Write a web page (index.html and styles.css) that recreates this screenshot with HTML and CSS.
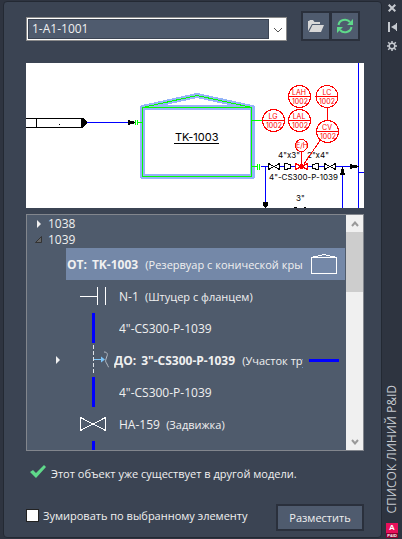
FILE: index.html
```html
<!DOCTYPE html>
<html lang="ru">
<head>
    <meta charset="UTF-8">
    <meta name="viewport" content="width=device-width, initial-scale=1.0">
    <title>Список линий P&amp;ID</title>
    <link rel="stylesheet" href="styles.css">
</head>
<body>
  <main class="panel">
    <div class="toolbar">
      <div class="line-select">
        <select aria-label="Линия">
          <option>1-A1-1001</option>
        </select>
        <svg class="chevron" width="10" height="6" viewBox="0 0 10 6"><path d="M1 1l4 4 4-4"/></svg>
      </div>
      <div class="tools">
        <button type="button" aria-label="Открыть">
          <svg width="16" height="12" viewBox="0 0 16 12"><path fill="#d8d8d8" d="M0 11V1h1l1-1h3l1.500 2H12v2H4zM4.500 5H16l-3 7H1z"/></svg>
        </button>
        <button type="button" aria-label="Обновить">
          <svg width="16" height="16" viewBox="0 0 16 16"><g fill="none" stroke="#5fd98a" stroke-width="2"><path d="M1.500 7A6.500 6 0 0 1 13 4"/><path d="M14.500 9A6.500 6 0 0 1 3 12"/></g><path fill="#5fd98a" d="M16 1v6h-6zM0 15V9h6z"/></svg>
        </button>
      </div>
    </div>

    <svg class="drawing" viewBox="0 0 338 145">
      <!-- inlet -->
      <g class="black">
        <path d="M0 55.500H56M0 64.500H56M10.500 55V65M55.500 55V65"/>
        <path class="solid" d="M55 55h2l4 4v1l-4 5h-2zM102 57l8 2v1l-8 2zM33 61h1v1h-1z"/>
      </g>
      <path class="blue" d="M61 59.500H102"/>

      <!-- tank -->
      <path class="glow" d="M116.500 44.500H226.500V113.500H116.500ZL171 32.500L226 44.500"/>
      <path class="green" d="M116.500 44.500H225.500V113.500H116.500ZL171 32.500L226 44.500"/>
      <path class="green" d="M109.500 57v5M111.500 57v5M112 59.500h5M226 57.500h10M226 103.500h5M231.500 101v6M233.500 101v6"/>
      <text x="149" y="78" class="tag">TK-1003</text>
      <path class="black" d="M148 80.500h45"/>

      <!-- outlet line -->
      <path class="blue" d="M235 103.500h7M254 103.500h4M265 103.500h4M282 103.500h4M293 103.500h5M310 103.500h15M239.500 104V140M316.500 111V145M332.500 0V145M333 109.500H338"/>
      <g class="black">
        <path d="M242.500 100.500v6l11-6v6zM298.500 100.500v6l11-6v6zM258.500 100.500v6l6-1v-4zM292.500 100.500v6l-6-1v-4z"/>
        <path class="solid" d="M324 101l9 2v1l-9 2zM314 112l2-8h1l2 8zM237 139h5v3l-2 3h-1l-2-3z"/>
        <path d="M268 144.500h3M278 144.500h2"/>
      </g>
      <text x="252" y="95" class="size">4"x3"</text>
      <text x="281" y="95" class="size">2"x4"</text>
      <text x="243" y="117" class="size">4"-CS300-P-1039</text>
      <text x="270" y="138" class="size">3"</text>

      <!-- instruments -->
      <g class="red">
        <circle cx="247.500" cy="57.500" r="11"/>
        <circle cx="273.500" cy="33.500" r="11"/>
        <circle cx="273.500" cy="57.500" r="11"/>
        <circle cx="301" cy="33.500" r="11"/>
        <circle cx="301.500" cy="68.500" r="11"/>
        <circle cx="275.500" cy="82.500" r="6"/>
        <path d="M236 57.500h23M262 33.500h23M262 57.500h23M290 33.500h22M290 68.500h23M301.500 45v12M294 77.500L278 101M275.500 89v12M269.500 100.500v6l12-6v6z"/>
        <circle class="dot" cx="275.500" cy="103.500" r="2"/>
      </g>
      <g class="code">
        <text x="247" y="56">LG</text><text x="248" y="65">1002</text>
        <text x="273" y="32">LAH</text><text x="274" y="41">1002</text>
        <text x="273" y="56">LAL</text><text x="274" y="65">1002</text>
        <text x="301" y="32">LC</text><text x="301" y="41">1002</text>
        <text x="301" y="67">CV</text><text x="302" y="76">1002</text>
        <text x="276" y="85">E/H</text>
      </g>
    </svg>

    <div class="list">
      <ul class="tree">
        <li class="line"><svg class="closed" width="4" height="8" viewBox="0 0 4 8"><path d="M0 0l4 4-4 4z"/></svg>1038</li>
        <li class="line"><svg class="open" width="7" height="7" viewBox="0 0 7 7"><path d="M6.500 .5v6h-6z"/></svg>1039</li>
        <li class="item selected">
          <span class="label"><b>ОТ:</b><b>TK-1003</b> <span class="kind">(Резервуар с конической крышей)</span></span>
          <svg class="end" width="26" height="20" viewBox="0 0 26 20"><path d="M.5 3.500h25v16H.5zL13 .5l12.500 3"/></svg>
        </li>
        <li class="item">
          <svg class="symbol" width="26" height="32" viewBox="0 0 26 32"><path d="M0 16.500h17M17.500 7v18M25.500 7v18"/></svg>
          <span class="label">N-1 &nbsp;<span class="kind">(Штуцер с фланцем)</span></span>
        </li>
        <li class="item">
          <span class="symbol pipe"></span>
          <span class="label">4"-CS300-P-1039</span>
        </li>
        <li class="item to">
          <svg class="closed" width="4" height="8" viewBox="0 0 4 8"><path d="M0 0l4 4-4 4z"/></svg>
          <svg class="branch" width="17" height="32" viewBox="0 0 17 32"><path stroke="#dfe3e8" stroke-dasharray="4 2" d="M.5 1v30"/><path stroke="#7cc4f8" d="M1 15.500h10"/><path fill="#7cc4f8" d="M8 12.500l4 3-4 3z"/><path stroke="#b4bbc5" d="M11 8c3 0 4 2 3 4l-1 3c-1 3 0 3 1 5s1 3 2 3"/></svg>
          <span class="label"><b>ДО:</b><b>3"-CS300-P-1039</b> <span class="kind">(Участок трубопровода)</span></span>
          <span class="end bar"></span>
        </li>
        <li class="item">
          <span class="symbol pipe"></span>
          <span class="label">4"-CS300-P-1039</span>
        </li>
        <li class="item">
          <svg class="symbol" width="26" height="32" viewBox="0 0 26 32"><path d="M.5 9.500v13l25-13v13z"/></svg>
          <span class="label">HA-159 &nbsp;<span class="kind">(Задвижка)</span></span>
        </li>
        <li class="item">
          <span class="symbol pipe"></span>
        </li>
      </ul>
      <div class="scrollbar">
        <button type="button" aria-label="Вверх"><svg width="8" height="6" viewBox="0 0 8 6"><path d="M1 5l3-3.500L7 5"/></svg></button>
        <div class="thumb"></div>
        <button type="button" class="down" aria-label="Вниз"><svg width="8" height="6" viewBox="0 0 8 6"><path d="M1 1l3 3.500L7 1"/></svg></button>
      </div>
    </div>

    <p class="status">
      <svg width="16" height="14" viewBox="0 0 16 14"><path fill="#5fd98a" d="M0 7l3-2 3 3 8-8 2 2L6 13z"/></svg>
      Этот объект уже существует в другой модели.
    </p>

    <div class="footer">
      <input type="checkbox" id="zoom">
      <label for="zoom">Зумировать по выбранному элементу</label>
      <button type="button" class="place">Разместить</button>
    </div>
  </main>

  <aside class="sidebar">
    <button type="button" aria-label="Закрыть"><svg width="8" height="8" viewBox="0 0 8 8"><path d="M.7.7l6.600 6.600M7.300.7L.7 7.300" stroke-width="2"/></svg></button>
    <button type="button" aria-label="Автоскрытие"><svg width="9" height="10" viewBox="0 0 9 10"><path d="M1 0v10" stroke-width="2"/><path d="M8.500 1v8"/><path fill="#c5c9cf" stroke="none" d="M3 5l5-3v6z"/></svg></button>
    <button type="button" aria-label="Свойства"><svg width="10" height="10" viewBox="0 0 10 10"><circle cx="5" cy="5" r="2.800" stroke-width="1.500"/><path stroke-width="1.500" d="M5 0v2M5 8v2M0 5h2M8 5h2M1.200 1.200l1.500 1.500M7.300 7.300l1.500 1.500M8.800 1.200L7.300 2.700M2.700 7.300L1.200 8.800"/></svg></button>
    <span class="title">СПИСОК ЛИНИЙ P&amp;ID</span>
    <span class="logo">A<small>P&amp;ID</small></span>
  </aside>
</body>
</html>
```
FILE: styles.css
```css
* {
  box-sizing: border-box;
}

body {
  margin: 0;
  min-height: 100vh;
  display: flex;
  padding: 1px 0 1px 3px;
  font-family: "Open Sans", "Noto Sans", sans-serif;
  font-size: 12px;
  line-height: 16px;
  color: #f0f0f0;
  background-color: #2e3440;
}

button,
select {
  font: inherit;
  color: inherit;
}

button {
  display: flex;
  align-items: center;
  justify-content: center;
  padding: 0;
  border: none;
}

.panel {
  flex: 1;
  min-width: 0;
  padding: 9px 17px 0 22px;
  border: 1px solid #232933;
  border-radius: 4px;
  background-color: #3b4453;
}

/* top row */
.toolbar {
  display: flex;
  gap: 14px;
  align-items: flex-end;
  padding-right: 4px;
  margin-bottom: 22px;
}

.line-select {
  position: relative;
  flex: 1;
  height: 24px;
  padding-right: 16px;
  border: 1px solid #8a8a8a;
  background-color: #fff;
}

.line-select select {
  display: block;
  width: 100%;
  height: 22px;
  padding: 0 4px;
  border: 1px solid #fff;
  outline: 1px solid #3b4453;
  outline-offset: -2px;
  appearance: none;
  border-radius: 0;
  background-color: #4f5b6e;
}

.chevron {
  position: absolute;
  right: 3px;
  top: 9px;
  fill: none;
  stroke: #555;
  pointer-events: none;
}

.tools {
  display: flex;
  gap: 3px;
  padding: 2px;
  background-color: #2a303c;
}

.tools button {
  width: 26px;
  height: 26px;
  background-color: #4f5b6e;
}

/* diagram */
.drawing {
  display: block;
  width: 100%;
  margin-bottom: 6px;
  background-color: #fff;
}

.drawing path,
.drawing circle {
  fill: none;
  shape-rendering: crispEdges;
}

.drawing .black { stroke: #000; }
.drawing .blue { stroke: #00f; }
.drawing .green { stroke: #0f0; }
.drawing .red { stroke: #f00; }
.drawing .glow { stroke: #94b4f8; stroke-width: 5; stroke-linejoin: round; }
.drawing .solid { fill: #000; stroke: none; }
.drawing .dot { fill: #f00; }

.tag {
  font: 11px "Inter", sans-serif;
}

.size {
  font: 8px "Inter", sans-serif;
}

.code {
  font: 7px "Inter", sans-serif;
  fill: #f00;
  text-anchor: middle;
}

/* component list */
.list {
  display: flex;
  height: 237px;
  border: 1px solid #82868d;
  background-color: #4f5b6c;
}

.tree {
  flex: 1;
  min-width: 0;
  margin: 0;
  padding: 1px 1px 0 0;
  overflow: hidden;
  list-style: none;
}

.line {
  position: relative;
  padding-left: 21px;
}

.line svg {
  position: absolute;
  left: 10px;
  top: 4px;
}

.line .open {
  left: 8px;
  fill: #666;
  stroke: #333;
}

.closed {
  fill: #f0f0f0;
}

.item {
  display: flex;
  align-items: center;
  height: 32px;
  margin-left: 39px;
  padding-left: 14px;
}

.selected {
  padding-left: 1px;
  background-color: #7488a8;
}

.item.to {
  margin-left: 0;
  padding-left: 29px;
}

.symbol {
  flex: none;
  width: 26px;
  margin-right: 13px;
  fill: none;
  stroke: #fff;
  shape-rendering: crispEdges;
}

.symbol.pipe {
  width: 3px;
  height: 30px;
  margin: 0 24px 0 12px;
  background-color: #00f;
}

.branch {
  flex: none;
  margin: 0 4px 0 33px;
  fill: none;
}

.label {
  padding-top: 2px;
  white-space: nowrap;
  overflow: hidden;
}

.label b {
  margin-right: 4px;
}

.label b:first-child {
  margin-right: 5px;
}

.kind {
  font-size: 11px;
}

.selected .label,
.to .label {
  flex: 1;
}

.end {
  flex: none;
  margin: 0 8px;
  fill: none;
  stroke: #fff;
  shape-rendering: crispEdges;
}

.end.bar {
  width: 30px;
  height: 3px;
  margin: 0 6px;
  background-color: #00f;
}

.scrollbar {
  display: flex;
  flex-direction: column;
  width: 17px;
  background-color: #f0f0f0;
}

.scrollbar button {
  height: 17px;
  background-color: #f0f0f0;
}

.scrollbar .down {
  margin-top: auto;
}

.scrollbar svg {
  fill: none;
  stroke: #999;
  stroke-width: 2;
}

.thumb {
  height: 60px;
  background-color: #cdcdcd;
}

/* bottom */
.status {
  display: flex;
  align-items: center;
  gap: 5px;
  height: 16px;
  margin: 15px 0 22px;
  padding-left: 4px;
  font-size: 11px;
}

.status svg {
  margin-bottom: 4px;
}

.footer {
  display: flex;
  align-items: center;
  font-size: 11px;
}

.footer input {
  appearance: none;
  width: 13px;
  height: 13px;
  margin: 0 4px 4px 0;
  border: 1px solid #222;
  background-color: #fff;
}

.footer label {
  margin-bottom: 4px;
}

.place {
  width: 88px;
  height: 27px;
  margin-left: auto;
  border: 2px solid #2a303c;
  background-color: #4f5b6e;
}

/* palette caption */
.sidebar {
  display: flex;
  flex-direction: column;
  align-items: center;
  gap: 9px;
  width: 20px;
  padding-top: 2px;
}

.sidebar button {
  width: 12px;
  height: 10px;
  background: none;
}

.sidebar svg {
  fill: none;
  stroke: #c5c9cf;
}

.title {
  margin-top: auto;
  writing-mode: vertical-rl;
  transform: rotate(180deg);
  white-space: nowrap;
  color: #c5c9cf;
}

.logo {
  width: 12px;
  height: 15px;
  background: linear-gradient(#e8105a 10px, #8a0030 10px);
  color: #fff;
  font: bold 8px/10px "Liberation Sans", sans-serif;
  text-align: center;
}

.logo small {
  display: block;
  font-size: 4px;
  line-height: 5px;
}
```
